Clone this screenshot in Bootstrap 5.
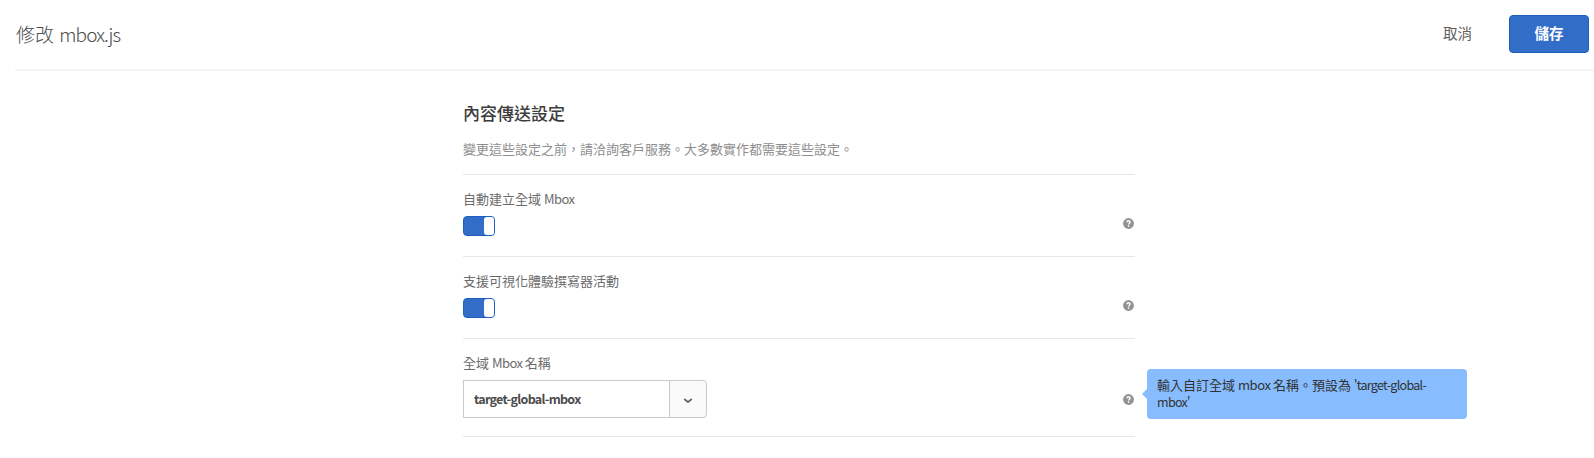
<!DOCTYPE html>
<html lang="zh-Hant">
<head>
<meta charset="utf-8">
<meta name="viewport" content="width=device-width, initial-scale=1">
<title>修改 mbox.js</title>
<link href="https://cdn.jsdelivr.net/npm/bootstrap@5.3.0/dist/css/bootstrap.min.css" rel="stylesheet">
<style>
body{font-family:"Noto Sans CJK TC",sans-serif;font-size:13px;line-height:17px;color:#6b6b6b;background:#fff;overflow:hidden}
.topbar{margin-left:15px;height:71px;border-bottom:2px solid #f4f4f4;padding:0 5px 2px 1px}
.page-title{font-size:19px;font-weight:300;line-height:24px;color:#4b4b4b;padding-top:1px}
.page-title span{letter-spacing:-.85px;margin-left:1px}
.btn-cancel{--bs-btn-color:#606060;font-size:14.5px;line-height:20px;padding:0 0 1px;border:0;margin-right:37px}
.btn-save{--bs-btn-color:#fff;--bs-btn-bg:#326ec8;--bs-btn-border-color:#1d5fbe;width:80px;height:38px;font-size:14.5px;font-weight:700;line-height:20px;padding:0 0 2px;border-radius:4px}
.settings{width:672px;margin-left:463px;padding-top:31px}
.section-title{font-size:17px;font-weight:500;line-height:22px;color:#3d3d3d;margin-bottom:16px}
.intro{color:#8e8e8e;height:35px;border-bottom:1px solid #e6e6e6}
.setting{height:82px;border-bottom:1px solid #e6e6e6;padding-top:15px}
.setting.tall{height:98px}
.setting-label{margin-bottom:9px}
.setting-label span{letter-spacing:-.55px}
.switch{width:32px;height:20px;background:#326ec8;border:1px solid #1d5fbe;border-radius:4px}
.switch i{width:10px;background:#fff;border-radius:3px}
.help{width:11px;height:11px;right:1px}
.combo{width:244px;height:38px}
.combo .form-control{border-color:#cacaca;border-radius:0;font-size:12.5px;letter-spacing:-.7px;font-weight:700;color:#4b4b4b;padding:0 10px 1px;height:38px}
.combo .btn{width:38px;border:1px solid #cacaca;border-radius:0 4px 4px 0;background:#fafafa;padding:3px 0 0}
.tip{left:684px;top:30px;width:320px;height:50px;background:#87bdff;border-radius:4px;color:#323232;padding:7px 10px}
.tip .word{letter-spacing:-.4px}
.tip .value{font-size:12.5px;letter-spacing:-.7px}
.tip::before{content:"";position:absolute;left:-5px;top:20px;border:5px solid transparent;border-left:0;border-right-color:#87bdff}
</style>
</head>
<body>
<svg class="d-none"><symbol id="help" viewBox="0 0 11 11"><circle cx="5.5" cy="5.5" r="5.4" fill="#929292"/><path d="M3.9 4.2C4 2.3 7.1 2.3 7.1 4.1 7.1 5.2 5.6 5.2 5.6 6.5" fill="none" stroke="#fff" stroke-width="1.4"/><rect x="4.9" y="7.4" width="1.4" height="1.4" fill="#fff"/></symbol></svg>
<header class="topbar d-flex align-items-center">
  <h1 class="page-title mb-0 me-auto">修改 <span>mbox.js</span></h1>
  <button class="btn btn-cancel">取消</button>
  <button class="btn btn-save">儲存</button>
</header>
<main class="settings">
  <h2 class="section-title">內容傳送設定</h2>
  <p class="intro mb-0">變更這些設定之前，請洽詢客戶服務。大多數實作都需要這些設定。</p>
  <section class="setting position-relative">
    <div class="setting-label">自動建立全域 <span>Mbox</span></div>
    <div class="switch d-flex justify-content-end" role="switch" aria-checked="true"><i></i></div>
    <svg class="help position-absolute" style="top:43px"><use href="#help"/></svg>
  </section>
  <section class="setting position-relative">
    <div class="setting-label">支援可視化體驗撰寫器活動</div>
    <div class="switch d-flex justify-content-end" role="switch" aria-checked="true"><i></i></div>
    <svg class="help position-absolute" style="top:43px"><use href="#help"/></svg>
  </section>
  <section class="setting tall position-relative">
    <div class="setting-label">全域 <span>Mbox </span>名稱</div>
    <div class="combo input-group flex-nowrap">
      <input class="form-control" type="text" value="target-global-mbox">
      <button class="btn d-flex align-items-center justify-content-center" type="button"><svg width="10" height="6" viewBox="0 0 10 6"><path d="M1.3 1 5 4.2 8.7 1" fill="none" stroke="#606060" stroke-width="1.7"/></svg></button>
    </div>
    <svg class="help position-absolute" style="top:55px"><use href="#help"/></svg>
    <div class="tip position-absolute">輸入自訂全域 <span class="word">mbox </span>名稱。預設為 <span class="value">'target-global-<br>mbox'</span></div>
  </section>
</main>
<script src="https://cdn.jsdelivr.net/npm/bootstrap@5.3.0/dist/js/bootstrap.bundle.min.js"></script>
</body>
</html>
